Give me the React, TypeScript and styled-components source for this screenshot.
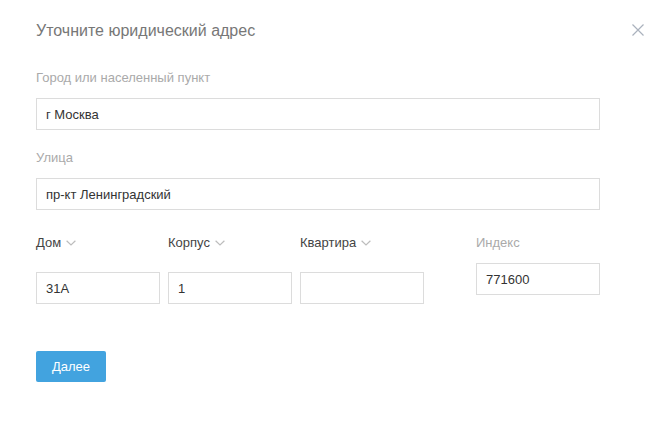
import React, { ReactElement } from "react"
import styled, { createGlobalStyle } from "styled-components"

const GlobalStyle = createGlobalStyle`
  html, body {
    margin: 0;
    padding: 0;
    background: #fff;
  }
  body {
    font-family: "Liberation Sans", Arial, sans-serif;
    font-size: 13px;
  }
  * {
    box-sizing: border-box;
  }
`

const Modal = styled.div`
  width: 671px;
  height: 425px;
  padding: 21px 27px 0 36px;
  background: #fff;
`

const Header = styled.div`
  display: flex;
  justify-content: space-between;
  align-items: center;
  height: 20px;
`

const Title = styled.h2`
  margin: 0;
  font-size: 16px;
  font-weight: normal;
  line-height: 20px;
  color: #777;
`

const CloseButton = styled.button`
  border: 0;
  padding: 0;
  background: none;
  width: 12px;
  height: 12px;
  display: flex;
  cursor: pointer;
  margin-top: -2px;
`

const Form = styled.div`
  width: 564px;
  margin-top: 29px;
  display: flex;
  flex-direction: column;
  align-items: flex-start;
`

const Field = styled.div`
  width: 100%;
  display: flex;
  flex-direction: column;
  margin-bottom: 20px;
`

const Label = styled.div<{ $dark?: boolean; $gap?: number }>`
  display: flex;
  align-items: center;
  gap: 5px;
  height: 16px;
  line-height: 16px;
  margin-bottom: ${(p) => p.$gap ?? 12}px;
  color: ${(p) => (p.$dark ? "#444" : "#aaa")};
`

const Input = styled.input`
  width: 100%;
  height: 32px;
  padding: 0 9px;
  border: 1px solid #dcdcdc;
  border-radius: 0;
  font-family: inherit;
  font-size: 13px;
  color: #333;
  outline: none;
  background: #fff;
`

// Row of short fields; the street field above leaves 20px, this adds 5px more
const Row = styled.div`
  width: 100%;
  display: flex;
  gap: 8px;
  margin-top: 5px;
`

const Column = styled.div<{ $push?: number }>`
  width: 124px;
  display: flex;
  flex-direction: column;
  margin-left: ${(p) => p.$push ?? 0}px;
`

const SubmitButton = styled.button`
  margin-top: 47px;
  width: 70px;
  height: 31px;
  border: 0;
  border-radius: 2px;
  background: #42a3df;
  color: #fff;
  font-family: inherit;
  font-size: 13px;
  cursor: pointer;
`

const Chevron = (): ReactElement => (
  <svg width="10" height="6" viewBox="0 0 10 6" fill="none">
    <path d="M0.6 0.8 L5 5 L9.4 0.8" stroke="#bdbdbd" strokeWidth="1.2" />
  </svg>
)

const CloseIcon = (): ReactElement => (
  <svg width="12" height="12" viewBox="0 0 12 12" fill="none">
    <path d="M0.5 0.5 L11.5 11.5 M11.5 0.5 L0.5 11.5" stroke="#aab2bd" strokeWidth="1.2" />
  </svg>
)

interface DropFieldProps {
  label: string
  value: string
  push?: number
}

const DropField = ({ label, value, push }: DropFieldProps): ReactElement => (
  <Column $push={push}>
    <Label $dark $gap={21}>
      {label}
      <Chevron />
    </Label>
    <Input defaultValue={value} />
  </Column>
)

const App = (): ReactElement => (
  <>
    <GlobalStyle />
    <Modal>
      <Header>
        <Title>Уточните юридический адрес</Title>
        <CloseButton aria-label="Закрыть">
          <CloseIcon />
        </CloseButton>
      </Header>
      <Form>
        <Field>
          <Label>Город или населенный пункт</Label>
          <Input defaultValue="г Москва" />
        </Field>
        <Field>
          <Label>Улица</Label>
          <Input defaultValue="пр-кт Ленинградский" />
        </Field>
        <Row>
          <DropField label="Дом" value="31А" />
          <DropField label="Корпус" value="1" />
          <DropField label="Квартира" value="" />
          <Column $push={44}>
            <Label>Индекс</Label>
            <Input defaultValue="771600" />
          </Column>
        </Row>
        <SubmitButton>Далее</SubmitButton>
      </Form>
    </Modal>
  </>
)

export default App
